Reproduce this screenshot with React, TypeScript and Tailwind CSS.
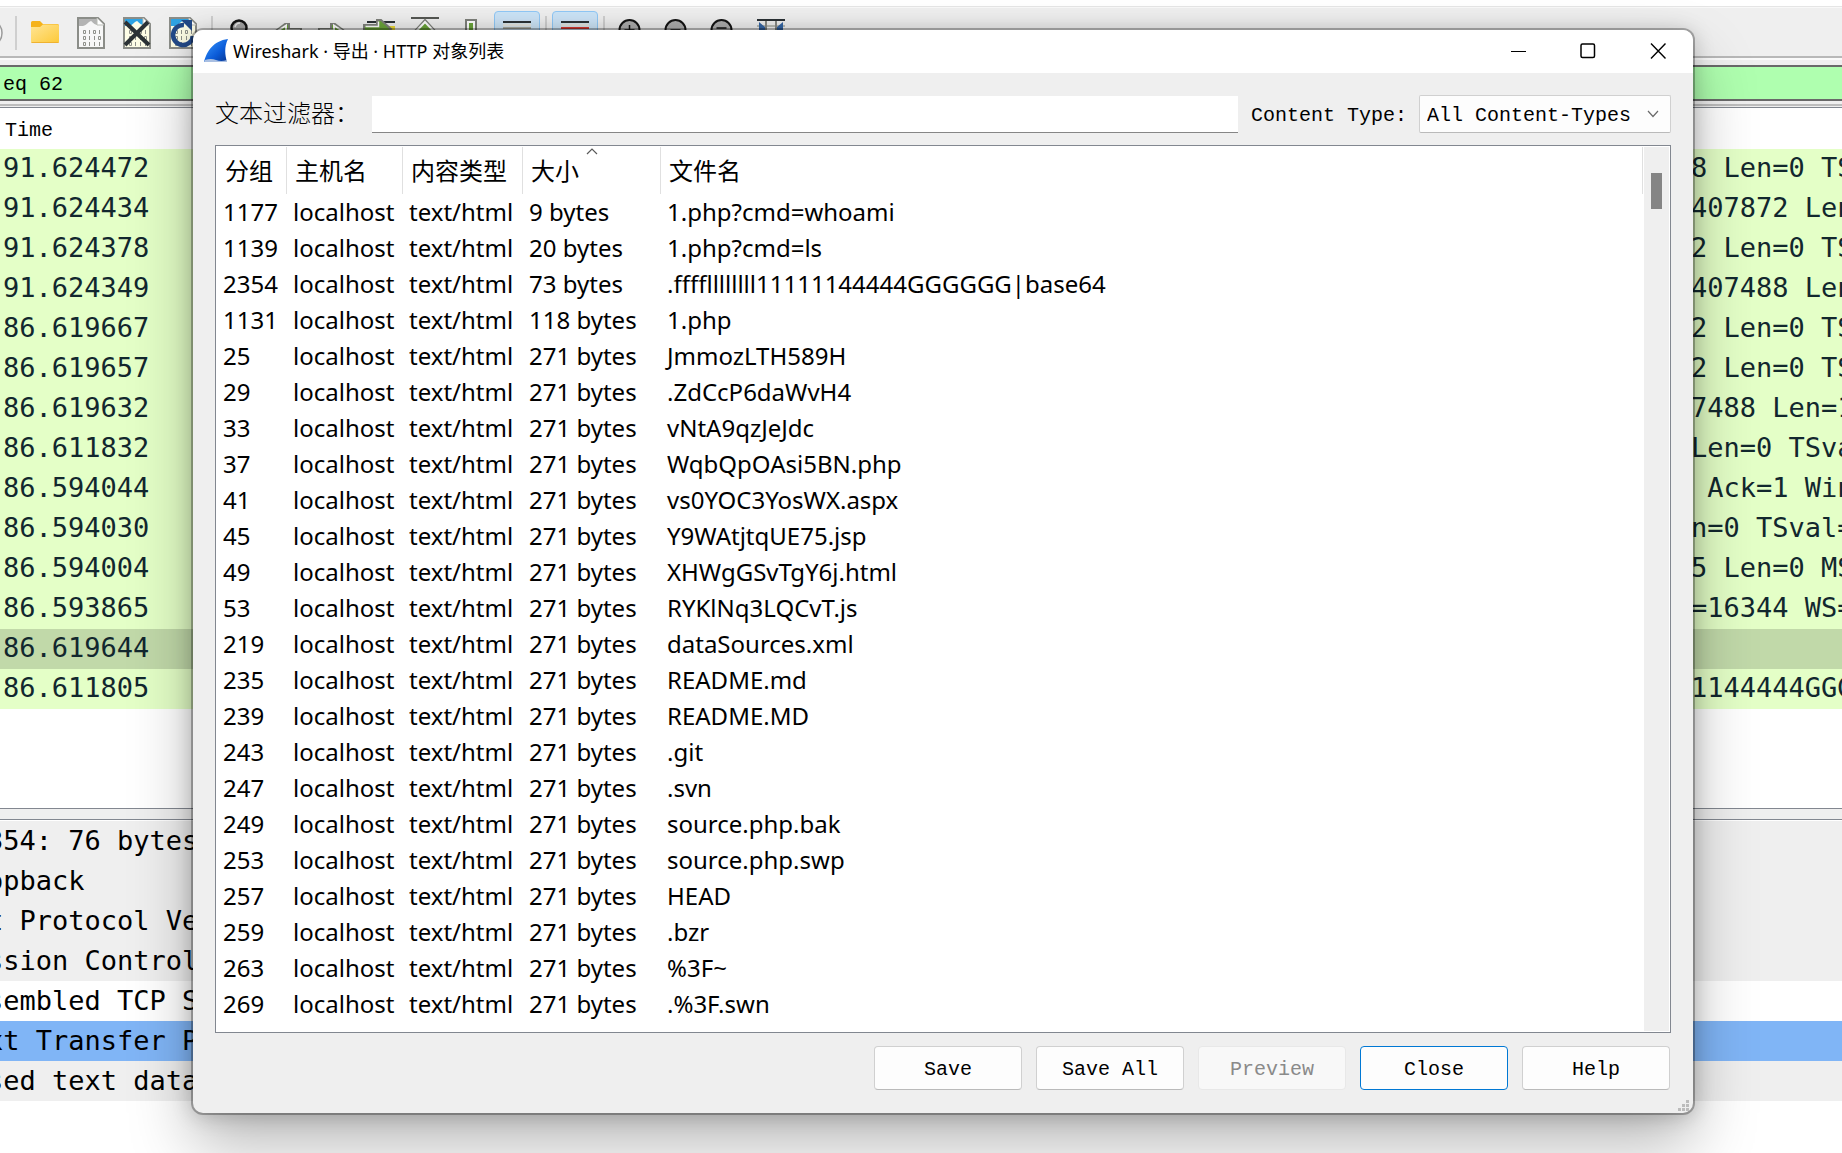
import React, { useState } from 'react';

interface HttpObject {
    packet: number;
    size: string;
    filename: string;
}

interface PacketRow {
    time: string;
    info: string;
    selected?: boolean;
}

const objects: HttpObject[] = [
    { packet: 1177, size: '9 bytes', filename: '1.php?cmd=whoami' },
    { packet: 1139, size: '20 bytes', filename: '1.php?cmd=ls' },
    { packet: 2354, size: '73 bytes', filename: '.ffffllllllll11111144444GGGGGG|base64' },
    { packet: 1131, size: '118 bytes', filename: '1.php' },
    { packet: 25, size: '271 bytes', filename: 'JmmozLTH589H' },
    { packet: 29, size: '271 bytes', filename: '.ZdCcP6daWvH4' },
    { packet: 33, size: '271 bytes', filename: 'vNtA9qzJeJdc' },
    { packet: 37, size: '271 bytes', filename: 'WqbQpOAsi5BN.php' },
    { packet: 41, size: '271 bytes', filename: 'vs0YOC3YosWX.aspx' },
    { packet: 45, size: '271 bytes', filename: 'Y9WAtjtqUE75.jsp' },
    { packet: 49, size: '271 bytes', filename: 'XHWgGSvTgY6j.html' },
    { packet: 53, size: '271 bytes', filename: 'RYKlNq3LQCvT.js' },
    { packet: 219, size: '271 bytes', filename: 'dataSources.xml' },
    { packet: 235, size: '271 bytes', filename: 'README.md' },
    { packet: 239, size: '271 bytes', filename: 'README.MD' },
    { packet: 243, size: '271 bytes', filename: '.git' },
    { packet: 247, size: '271 bytes', filename: '.svn' },
    { packet: 249, size: '271 bytes', filename: 'source.php.bak' },
    { packet: 253, size: '271 bytes', filename: 'source.php.swp' },
    { packet: 257, size: '271 bytes', filename: 'HEAD' },
    { packet: 259, size: '271 bytes', filename: '.bzr' },
    { packet: 263, size: '271 bytes', filename: '%3F~' },
    { packet: 269, size: '271 bytes', filename: '.%3F.swn' },
    { packet: 273, size: '271 bytes', filename: '.hg' },
];

const packets: PacketRow[] = [
    { time: '91.624472', info: '8 Len=0 TS' },
    { time: '91.624434', info: '407872 Len' },
    { time: '91.624378', info: '2 Len=0 TS' },
    { time: '91.624349', info: '407488 Len' },
    { time: '86.619667', info: '2 Len=0 TS' },
    { time: '86.619657', info: '2 Len=0 TS' },
    { time: '86.619632', info: '7488 Len=1' },
    { time: '86.611832', info: 'Len=0 TSva' },
    { time: '86.594044', info: ' Ack=1 Win' },
    { time: '86.594030', info: 'n=0 TSval=' },
    { time: '86.594004', info: '5 Len=0 MS' },
    { time: '86.593865', info: '=16344 WS=' },
    { time: '86.619644', info: '', selected: true },
    { time: '86.611805', info: '1144444GGG' },
];

const details = [
    { text: '354: 76 bytes', style: 'bg-[#efefef]' },
    { text: 'opback', style: 'bg-[#efefef]' },
    { text: 't Protocol Ver', style: 'bg-[#efefef]' },
    { text: 'ssion Control', style: 'bg-[#efefef]' },
    { text: 'sembled TCP Se', style: 'bg-white' },
    { text: 'xt Transfer Pr', style: 'bg-[#80b5f6]' },
    { text: 'sed text data', style: 'bg-[#efefef]' },
];

const Icon = ({ children }: { children: React.ReactNode }) => (
    <svg className="h-8 w-8" viewBox="0 0 32 32" fill="none">{children}</svg>
);

const FileSheet = ({ top, paper }: { top: string; paper: string }) => (
    <>
        <path d="M3 1H23L29 7V31H3Z" fill={paper} stroke="#8b8d88" strokeWidth="2" />
        <path d="M4 2H22V8C18 7 17 4 16 4C13 5 12 8 8 9H4Z" fill={top} />
        <path d="M22 1V8H29" fill="#ffffff" stroke="#b9bbb5" strokeWidth="1" />
        <g fill="none" stroke="#8f918b" strokeWidth="1">
            <path d="M8.500 13.500h2v3h-2zM18.500 13.500h2v3h-2zM14.500 13v4M24.500 13v4" />
            <path d="M8.500 19.500h2v3h-2zM23.500 19.500h2v3h-2zM14.500 19v4M19.500 19v4" />
            <path d="M8.500 25.500h2v3h-2zM14.500 25v4M19.500 25v4M24.500 25v4" />
        </g>
    </>
);

const Lens = ({ sign }: { sign: string }) => (
    <Icon>
        <circle cx="12.500" cy="13" r="10" fill="#adadad" stroke="#141414" strokeWidth="2" />
        <path d={sign} stroke="#141414" strokeWidth="1.500" />
        <path d="M20 20L29 29" stroke="#141414" strokeWidth="4" />
    </Icon>
);

const Tool = ({ label, on, children }: { label: string; on?: boolean; children: React.ReactNode }) => (
    <button
        type="button"
        aria-label={label}
        className={
            on
                ? 'flex h-11 w-[46px] shrink-0 items-center justify-center rounded-sm border border-[#90c8f6] bg-[#cce4f7]'
                : 'flex h-11 w-[46px] shrink-0 items-center justify-center'
        }
    >
        {children}
    </button>
);

const Divider = () => (
    <div className="flex h-11 w-3 shrink-0 justify-center py-[5px]">
        <span className="w-[2px] bg-[#cfcfcf]" />
    </div>
);

const Toolbar = () => (
    <div className="flex h-12 items-end overflow-hidden bg-[#efefef] pb-px">
        <div className="flex h-11 w-[10px] shrink-0 items-center justify-end overflow-hidden pr-[6px]">
            <svg className="h-8 w-8 shrink-0" viewBox="0 0 32 32" fill="none">
                <circle cx="16" cy="16" r="14" fill="#f6f6f6" stroke="#9a9a9a" strokeWidth="1.500" />
            </svg>
        </div>
        <Divider />
        <Tool label="Open">
            <Icon>
                <path d="M2 5.500Q2 4 3.500 4H11L14 7H28.500Q30 7 30 8.500V14H2Z" fill="#f5b21b" />
                <path d="M2 10H11L14 7.500H28.500Q30 7.500 30 9V24.500Q30 26 28.500 26H3.500Q2 26 2 24.500Z" fill="url(#folder)" />
                <path d="M2.500 25.500H29.500" stroke="#efb230" strokeWidth="1" />
                <defs>
                    <linearGradient id="folder" x1="0" y1="0" x2="1" y2="1">
                        <stop offset="0" stopColor="#ffe596" />
                        <stop offset="1" stopColor="#fdc937" />
                    </linearGradient>
                </defs>
            </Icon>
        </Tool>
        <Tool label="Save">
            <Icon><FileSheet top="#b4b4b4" paper="#f7f7f7" /></Icon>
        </Tool>
        <Tool label="Close file">
            <Icon>
                <FileSheet top="#2ea3e3" paper="#fdfde6" />
                <path d="M4 5L28 28M27 5L4 28" stroke="#2b3236" strokeWidth="4" />
            </Icon>
        </Tool>
        <Tool label="Reload">
            <Icon>
                <FileSheet top="#2ea3e3" paper="#fdfde6" />
                <path d="M17 8A10 10 0 1 0 26 19" stroke="#234a88" strokeWidth="4.500" />
                <path d="M14 3H25V14Z" fill="#234a88" />
            </Icon>
        </Tool>
        <Divider />
        <Tool label="Find">
            <Icon>
                <circle cx="14" cy="11" r="7.500" fill="#a4a4a4" stroke="#141414" strokeWidth="2.500" />
                <path d="M10 10Q11 6 15 6" stroke="#e8e8e8" strokeWidth="1.500" />
                <path d="M19 17L28 28" stroke="#141414" strokeWidth="5" />
            </Icon>
        </Tool>
        <Tool label="Back">
            <Icon>
                <path d="M2 16L14 7H18V12H30V20H18V25H14Z" fill="#6ba53a" stroke="#7e817b" strokeWidth="2" />
                <path d="M5 15L15 8.500V13.500H29" stroke="#ffffff" strokeWidth="2" />
            </Icon>
        </Tool>
        <Tool label="Forward">
            <Icon>
                <path d="M30 16L18 7H14V12H2V20H14V25H18Z" fill="#6ba53a" stroke="#7e817b" strokeWidth="2" />
                <path d="M27 15L17 8.500V13.500H3" stroke="#ffffff" strokeWidth="2" />
            </Icon>
        </Tool>
        <Tool label="Go to packet">
            <Icon>
                <path d="M4 5H32" stroke="#2b3236" strokeWidth="2" />
                <path d="M20 9H32V14H20Z" fill="#ecd936" />
                <path d="M1 8H14V3H18L28 12L18 21H14V16H1Z" fill="#6ba53a" stroke="#7e817b" strokeWidth="2" />
                <path d="M2.500 9.500H15.500V4.500" stroke="#ffffff" strokeWidth="1.500" />
            </Icon>
        </Tool>
        <Tool label="First packet">
            <Icon>
                <path d="M2 1H30" stroke="#555753" strokeWidth="2" />
                <path d="M16 3L27 15H20V30H12V15H5Z" fill="#6ba53a" stroke="#7e817b" strokeWidth="2" />
                <path d="M7.500 14L16 5L24.500 14" stroke="#ffffff" strokeWidth="2" />
            </Icon>
        </Tool>
        <Tool label="Last packet">
            <Icon>
                <path d="M11 3H21V16H28L16 28L4 16H11Z" fill="#ffffff" stroke="#7e817b" strokeWidth="2" />
                <path d="M14 6H18V18H14Z" fill="#6ba53a" />
            </Icon>
        </Tool>
        <Tool label="Auto scroll" on>
            <Icon>
                <path d="M2 5H30" stroke="#2b3236" strokeWidth="2" />
                <path d="M2 8H30" stroke="#e3e4df" strokeWidth="3" />
                <path d="M2 11H30M2 17H30M2 23H30" stroke="#a6a89f" strokeWidth="2" />
            </Icon>
        </Tool>
        <Divider />
        <Tool label="Colorize" on>
            <Icon>
                <path d="M2 5H30" stroke="#2b3236" strokeWidth="2" />
                <path d="M2 8H30" stroke="#e3e4df" strokeWidth="3" />
                <path d="M2 11H30" stroke="#d33a32" strokeWidth="2" />
                <path d="M2 17H30" stroke="#3465a4" strokeWidth="2" />
            </Icon>
        </Tool>
        <Divider />
        <Tool label="Zoom in"><Lens sign="M7.500 13H17.500M12.500 8V18" /></Tool>
        <Tool label="Zoom out"><Lens sign="M7.500 13H17.500" /></Tool>
        <Tool label="Normal size"><Lens sign="M7.500 11H17.500M7.500 14H17.500" /></Tool>
        <Tool label="Resize columns">
            <Icon>
                <path d="M2 3H30" stroke="#2b3236" strokeWidth="2" />
                <path d="M2 9H30" stroke="#babdb6" strokeWidth="2" />
                <path d="M11 4V28M21 4V28" stroke="#888a85" strokeWidth="2" />
                <path d="M4 5L10 10V14H4ZM28 5L22 10V14H28Z" fill="#3465a4" />
            </Icon>
        </Tool>
    </div>
);

const PacketList = () => (
    <div className="h-[701px] overflow-hidden border-b border-[#828790] bg-white">
        <table className="w-full table-fixed border-collapse">
            <colgroup>
                <col />
                <col className="w-[151px]" />
            </colgroup>
            <thead>
                <tr className="h-[41px] text-left font-['Liberation_Mono',monospace] text-[20px]">
                    <th className="p-0 pt-1 pl-[5px] font-normal">Time</th>
                    <th className="p-0"></th>
                </tr>
            </thead>
            <tbody className="font-['DejaVu_Sans_Mono',monospace] text-[27px] leading-[38px] text-[#12272e]">
                {packets.map((row, index) => (
                    <tr key={index} className={row.selected ? 'h-10 bg-[#c1d9a9]' : 'h-10 bg-[#e4ffc7]'}>
                        <td className="p-0 pl-[3px] align-top">{row.time}</td>
                        <td className="overflow-hidden p-0 align-top whitespace-pre">{row.info}</td>
                    </tr>
                ))}
            </tbody>
        </table>
    </div>
);

const MainWindow = () => (
    <div className="flex h-full flex-col bg-[#efefef]">
        <div className="h-[7px] shrink-0 border-b border-[#e5e5e5] bg-white" />
        <div className="h-px shrink-0 bg-[#f8f8f8]" />
        <Toolbar />
        <div className="h-[2px] shrink-0 bg-[#b8b8b8]" />
        <div className="h-[2px] shrink-0 bg-[#fafafa]" />
        <input
            aria-label="Display filter"
            defaultValue="eq 62"
            className="mt-[5px] h-9 w-full shrink-0 border-y-2 border-[#696969] bg-[#afffaf] pt-[3px] pl-[3px] font-['Liberation_Mono',monospace] text-[20px] outline-none"
        />
        <div className="mt-[3px] h-[2px] shrink-0 bg-[#bdbdbd]" />
        <div className="mt-px h-px shrink-0 bg-[#828790]" />
        <PacketList />
        <div className="mt-[10px] flex-1 overflow-hidden border-t border-[#828790] bg-white pt-px">
            {details.map((line, index) => (
                <div key={index} className={line.style}>
                    <p className="-ml-[13px] h-10 font-['DejaVu_Sans_Mono',monospace] text-[27px] leading-10 whitespace-pre">
                        {line.text}
                    </p>
                </div>
            ))}
        </div>
    </div>
);

const TitleBar = () => (
    <div className="flex h-[43px] shrink-0 items-center bg-white pb-[2px] pl-[11px]">
        <svg className="h-6 w-6" viewBox="0 0 24 24">
            <defs>
                <linearGradient id="fin" x1="0" y1="0" x2="1" y2="1">
                    <stop offset="0" stopColor="#3a9bff" />
                    <stop offset="0.600" stopColor="#0b5bd8" />
                    <stop offset="1" stopColor="#06348f" />
                </linearGradient>
            </defs>
            <path d="M0 23C3 12 9 2 24 0C20 8 21 16 23 23Z" fill="url(#fin)" />
            <path d="M1 21Q7 19 12 21T23 21V23H0Z" fill="#a9bfe2" />
        </svg>
        <h1 className="ml-[5px] flex-1 font-['Noto_Sans','Noto_Sans_CJK_SC',sans-serif] text-lg whitespace-nowrap">
            Wireshark · 导出 · HTTP 对象列表
        </h1>
        <button type="button" aria-label="Minimize" className="flex h-full w-[70px] items-center justify-center">
            <svg className="h-4 w-4" viewBox="0 0 16 16"><path d="M1 8.500H16" stroke="#000" strokeWidth="1" /></svg>
        </button>
        <button type="button" aria-label="Maximize" className="flex h-full w-[70px] items-center justify-center">
            <svg className="h-4 w-4" viewBox="0 0 16 16" fill="none">
                <rect x="1" y="1" width="13.500" height="13.500" rx="1.500" stroke="#000" strokeWidth="1.500" />
            </svg>
        </button>
        <button type="button" aria-label="Close window" className="flex h-full w-[70px] items-center justify-center">
            <svg className="h-4 w-4" viewBox="0 0 16 16"><path d="M1 0.500L15.500 15.500M15.500 0.500L1 15.500" stroke="#000" strokeWidth="1.400" /></svg>
        </button>
    </div>
);

const ObjectTable = ({ filter }: { filter: string }) => {
    const rows = objects.filter((item) => item.filename.includes(filter));

    return (
        <div className="mx-[22px] mt-3 flex min-h-0 flex-1 border border-[#828790] bg-white p-px">
            <div className="min-w-0 flex-1 overflow-hidden">
                <table className="w-full table-fixed border-separate border-spacing-0 font-['Noto_Sans','Noto_Sans_CJK_SC',sans-serif] text-2xl">
                    <colgroup>
                        <col className="w-[70px]" />
                        <col className="w-[116px]" />
                        <col className="w-[120px]" />
                        <col className="w-[138px]" />
                        <col />
                    </colgroup>
                    <thead>
                        <tr className="h-[47px] text-left leading-[46px]">
                            <th className="border-r border-[#e0e0e0] p-0 pl-2 font-normal">分组</th>
                            <th className="border-r border-[#e0e0e0] p-0 pl-2 font-normal">主机名</th>
                            <th className="border-r border-[#e0e0e0] p-0 pl-2 font-normal">内容类型</th>
                            <th className="relative border-r border-[#e0e0e0] p-0 pl-2 font-normal">
                                大小
                                <svg className="absolute top-0 left-1/2 -ml-[6px] h-2 w-3" viewBox="0 0 12 8" fill="none">
                                    <path d="M1 7L6 2L11 7" stroke="#5a5a5a" strokeWidth="1.200" />
                                </svg>
                            </th>
                            <th className="border-r border-[#e0e0e0] p-0 pl-2 font-normal">文件名</th>
                        </tr>
                    </thead>
                    <tbody className="leading-9 whitespace-nowrap">
                        {rows.map((item) => (
                            <tr key={item.packet} className="h-9">
                                <td className="p-0 pl-[6px]">{item.packet}</td>
                                <td className="p-0 pl-[6px]">localhost</td>
                                <td className="p-0 pl-[6px]">text/html</td>
                                <td className="p-0 pl-[6px]">{item.size}</td>
                                <td className="p-0 pl-[6px]">{item.filename}</td>
                            </tr>
                        ))}
                    </tbody>
                </table>
            </div>
            <div className="ml-px w-[25px] shrink-0 bg-[#efefef] pt-[26px]">
                <div className="mx-auto h-9 w-[11px] bg-[#858585]" />
            </div>
        </div>
    );
};

const buttonStyle = 'h-11 w-[148px] rounded border border-[#d0d0d0] border-b-[#bababa] bg-[#fdfdfd] pt-[3px]';

const App: React.FC = () => {
    const [filter, setFilter] = useState('');

    return (
        <div className="relative h-screen overflow-hidden text-black">
            <MainWindow />
            <div className="absolute top-[30px] right-[149px] bottom-10 left-[193px] flex flex-col overflow-hidden rounded-[10px] bg-[#efefef] shadow-[0_0_0_2px_rgba(0,0,0,0.28),0_32px_64px_rgba(0,0,0,0.28),0_2px_21px_rgba(0,0,0,0.22)]">
                <TitleBar />
                <div className="mt-[22px] flex h-[38px] shrink-0 items-center px-[22px] font-['Liberation_Mono','Noto_Sans_CJK_SC',monospace] text-[20px]">
                    <label htmlFor="text-filter" className="pt-1 text-2xl font-light">文本过滤器：</label>
                    <input
                        id="text-filter"
                        value={filter}
                        onChange={(e) => setFilter(e.target.value)}
                        className="ml-[13px] h-[37px] min-w-0 flex-1 border-b border-[#868686] bg-white px-2 outline-none"
                    />
                    <label htmlFor="content-type" className="ml-[13px] pt-1">Content Type:</label>
                    <div className="relative ml-3 h-full w-[252px]">
                        <select
                            id="content-type"
                            className="h-full w-full appearance-none rounded-xs border border-[#d0d0d0] border-b-[#bababa] bg-[#fdfdfd] pt-1 pl-[7px] outline-none"
                        >
                            <option>All Content-Types</option>
                            <option>text/html</option>
                        </select>
                        <svg className="pointer-events-none absolute top-[15px] right-3 h-2 w-3" viewBox="0 0 12 8" fill="none">
                            <path d="M1 1L6 6.500L11 1" stroke="#6a6a6a" strokeWidth="1.200" />
                        </svg>
                    </div>
                </div>
                <ObjectTable filter={filter} />
                <div className="flex justify-end gap-[14px] px-[23px] pt-[13px] pb-[23px] font-['Liberation_Mono',monospace] text-[20px]">
                    <button type="button" className={buttonStyle}>Save</button>
                    <button type="button" className={buttonStyle}>Save All</button>
                    <button type="button" disabled className="h-11 w-[148px] rounded border border-[#e8e8e8] bg-[#f8f8f8] pt-[3px] text-[#8a8a8a]">
                        Preview
                    </button>
                    <button type="button" className="h-11 w-[148px] rounded border border-[#0078d4] bg-[#fdfdfd] pt-[3px]">Close</button>
                    <button type="button" className={buttonStyle}>Help</button>
                </div>
                <svg className="absolute right-1 bottom-[2px] h-[11px] w-[11px]" viewBox="0 0 11 11" fill="#bcbcbc">
                    <path d="M8 0h3v3h-3zM4 4h3v3h-3zM8 4h3v3h-3zM0 8h3v3h-3zM4 8h3v3h-3zM8 8h3v3h-3z" />
                </svg>
            </div>
        </div>
    );
};

export default App;
